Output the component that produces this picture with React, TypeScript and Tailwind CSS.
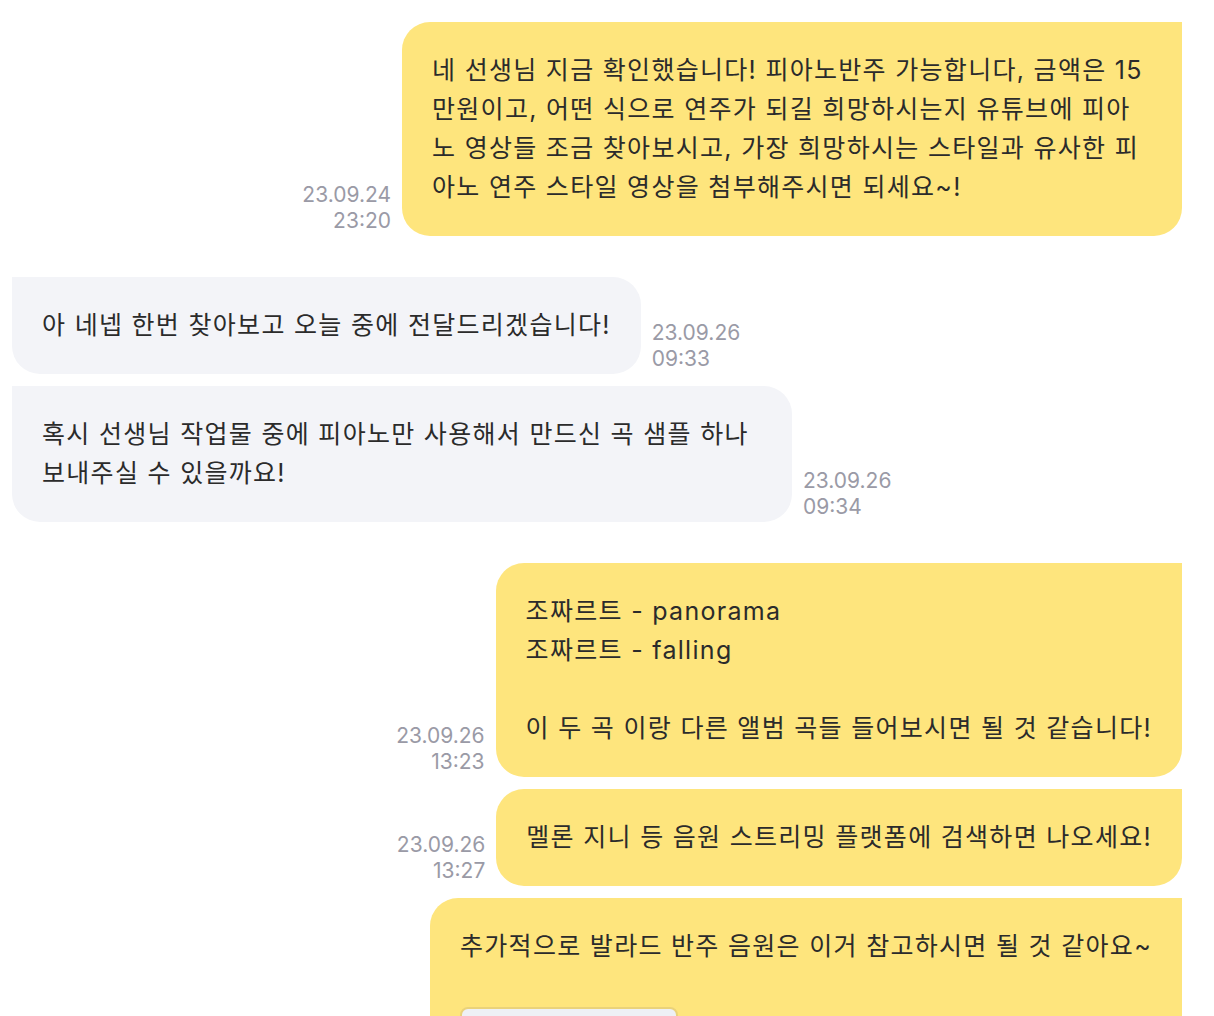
import React from "react";

const font = "font-['Inter','Noto_Sans_CJK_KR',sans-serif]";

interface Msg {
  id: number;
  mine: boolean;
  lines: string[];
  date: string;
  time: string;
  wide?: boolean;
  attach?: boolean;
  groupStart?: boolean;
}

const messages: Msg[] = [
  {
    id: 1,
    mine: true,
    wide: true,
    groupStart: true,
    lines: [
      "네 선생님 지금 확인했습니다! 피아노반주 가능합니다, 금액은 15",
      "만원이고, 어떤 식으로 연주가 되길 희망하시는지 유튜브에 피아",
      "노 영상들 조금 찾아보시고, 가장 희망하시는 스타일과 유사한 피",
      "아노 연주 스타일 영상을 첨부해주시면 되세요~!",
    ],
    date: "23.09.24",
    time: "23:20",
  },
  {
    id: 2,
    mine: false,
    groupStart: true,
    lines: ["아 네넵 한번 찾아보고 오늘 중에 전달드리겠습니다!"],
    date: "23.09.26",
    time: "09:33",
  },
  {
    id: 3,
    mine: false,
    wide: true,
    lines: [
      "혹시 선생님 작업물 중에 피아노만 사용해서 만드신 곡 샘플 하나",
      "보내주실 수 있을까요!",
    ],
    date: "23.09.26",
    time: "09:34",
  },
  {
    id: 4,
    mine: true,
    groupStart: true,
    lines: [
      "조짜르트 - panorama",
      "조짜르트 - falling",
      "\u00a0",
      "이 두 곡 이랑 다른 앨범 곡들 들어보시면 될 것 같습니다!",
    ],
    date: "23.09.26",
    time: "13:23",
  },
  {
    id: 5,
    mine: true,
    lines: ["멜론 지니 등 음원 스트리밍 플랫폼에 검색하면 나오세요!"],
    date: "23.09.26",
    time: "13:27",
  },
  {
    id: 6,
    mine: true,
    attach: true,
    lines: ["추가적으로 발라드 반주 음원은 이거 참고하시면 될 것 같아요~"],
    date: "",
    time: "",
  },
];

const Stamp = ({ date, time, right }: { date: string; time: string; right?: boolean }) => (
  <div
    className={
      "text-[21px] leading-[26px] text-[#9a9aa6] mb-[2px] shrink-0 " +
      (right ? "text-right" : "text-left")
    }
  >
    <div>{date}</div>
    <div>{time}</div>
  </div>
);

const Bubble = ({ m }: { m: Msg }) => (
  <div
    className={
      "px-[30px] py-[29px] rounded-[28px] text-[25px] leading-[39px] tracking-[1.3px] text-[#2b2b2b] whitespace-nowrap " +
      (m.mine ? "bg-[#fee57d] rounded-tr-none " : "bg-[#f3f4f8] rounded-tl-none ") +
      (m.wide ? "w-[780px] " : "") +
      (m.attach ? "pb-[60px]" : "")
    }
  >
    {m.lines.map((l, i) => (
      <div key={i}>{l}</div>
    ))}
    {m.attach && (
      <div className="mt-[41px] w-[218px] h-[120px] rounded-[8px] border-2 border-[#ead27a] bg-[#eef0f5]"></div>
    )}
  </div>
);

export default function App() {
  return (
    <div className={font + " bg-white min-h-screen pt-[22px] pl-[12px] pr-[32px] flex flex-col"}>
      {messages.map((m, i) => (
        <div
          key={m.id}
          className={
            "flex items-end gap-[11px] " +
            (m.mine ? "justify-end " : "justify-start ") +
            (i === 0 ? "" : m.groupStart ? "mt-[41px]" : "mt-[12px]")
          }
        >
          {m.mine && m.date && <Stamp date={m.date} time={m.time} right />}
          <Bubble m={m} />
          {!m.mine && <Stamp date={m.date} time={m.time} />}
        </div>
      ))}
    </div>
  );
}
